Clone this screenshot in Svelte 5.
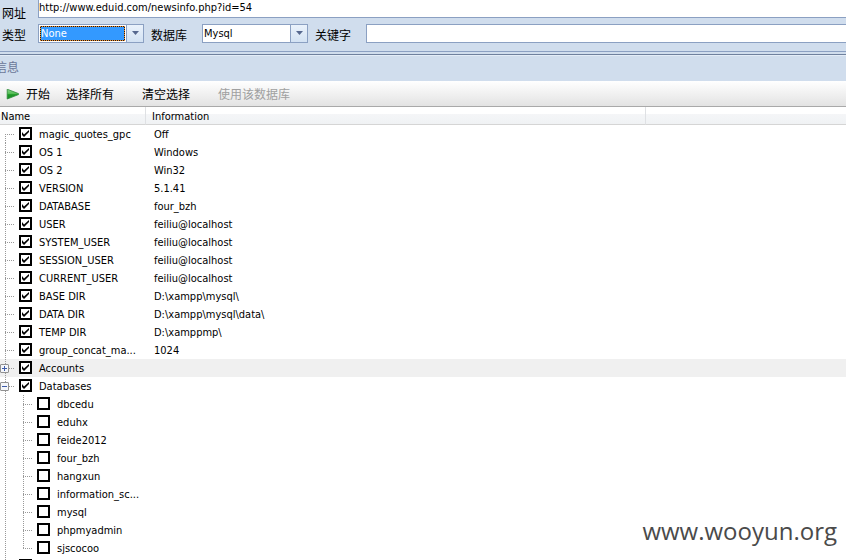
<script lang="ts">
  type Item = { name: string; info?: string; checked: boolean; open?: boolean; children?: string[] };

  let url = $state('http://www.eduid.com/newsinfo.php?id=54');
  let kind = $state('None');
  let database = $state('Mysql');
  let keyword = $state('');

  let items = $state<Item[]>([
    { name: 'magic_quotes_gpc', info: 'Off', checked: true },
    { name: 'OS 1', info: 'Windows', checked: true },
    { name: 'OS 2', info: 'Win32', checked: true },
    { name: 'VERSION', info: '5.1.41', checked: true },
    { name: 'DATABASE', info: 'four_bzh', checked: true },
    { name: 'USER', info: 'feiliu@localhost', checked: true },
    { name: 'SYSTEM_USER', info: 'feiliu@localhost', checked: true },
    { name: 'SESSION_USER', info: 'feiliu@localhost', checked: true },
    { name: 'CURRENT_USER', info: 'feiliu@localhost', checked: true },
    { name: 'BASE DIR', info: 'D:\\xampp\\mysql\\', checked: true },
    { name: 'DATA DIR', info: 'D:\\xampp\\mysql\\data\\', checked: true },
    { name: 'TEMP DIR', info: 'D:\\xamppmp\\', checked: true },
    { name: 'group_concat_ma...', info: '1024', checked: true },
    { name: 'Accounts', checked: true, open: false, children: [] },
    {
      name: 'Databases',
      checked: true,
      open: true,
      children: ['dbcedu', 'eduhx', 'feide2012', 'four_bzh', 'hangxun', 'information_sc...', 'mysql', 'phpmyadmin', 'sjscocoo'],
    },
    { name: '', checked: false },
  ]);

  let selected = $state('Accounts');
  let picked = $state<string[]>([]);

  function setAll(value: boolean) {
    for (const item of items) item.checked = value;
    picked = value ? items.flatMap((item) => item.children ?? []) : [];
  }
</script>

<main>
  <form class="query" onsubmit={(e) => e.preventDefault()}>
    <div class="line url-line">
      <label class="first" for="url">网址</label>
      <input id="url" class="field url" type="text" bind:value={url} />
    </div>
    <div class="line">
      <label class="first" for="kind">类型</label>
      <div class="combo focused">
        <select id="kind" bind:value={kind}>
          <option>None</option>
          <option>Integer</option>
          <option>String</option>
        </select>
        <span class="drop"><svg width="7" height="4" viewBox="0 0 7 4"><path d="M0 0h7L3.5 4z" fill="#56688f" /></svg></span>
      </div>
      <label for="database">数据库</label>
      <div class="combo">
        <select id="database" bind:value={database}>
          <option>Mysql</option>
          <option>MSSQL</option>
          <option>Oracle</option>
        </select>
        <span class="drop"><svg width="7" height="4" viewBox="0 0 7 4"><path d="M0 0h7L3.5 4z" fill="#56688f" /></svg></span>
      </div>
      <label for="keyword">关键字</label>
      <input id="keyword" class="field" type="text" bind:value={keyword} />
    </div>
  </form>

  <h1>信息</h1>

  <div class="toolbar">
    <button type="button" class="start">
      <svg width="13" height="12" viewBox="0 0 13 12">
        <defs>
          <linearGradient id="play" x1="0" y1="0" x2="0" y2="1">
            <stop offset="0" stop-color="#8ad68a" />
            <stop offset="0.5" stop-color="#4fba4f" />
            <stop offset="0.55" stop-color="#1c9a26" />
            <stop offset="1" stop-color="#1f8a2a" />
          </linearGradient>
        </defs>
        <path d="M1.200 .2 12.500 4.600v1L1.200 10z" fill="url(#play)" stroke="#2d8a3a" stroke-width=".8" stroke-linejoin="round" />
      </svg>
      开始
    </button>
    <button type="button" class="all" onclick={() => setAll(true)}>选择所有</button>
    <button type="button" class="none" onclick={() => setAll(false)}>清空选择</button>
    <button type="button" disabled>使用该数据库</button>
  </div>

  <table>
    <thead>
      <tr>
        <th class="name">Name</th>
        <th class="info">Information</th>
        <th></th>
      </tr>
    </thead>
    <tbody>
      {#each items as item, i}
        <tr class:selected={item.name !== '' && selected === item.name} onclick={() => (selected = item.name)}>
          <td>
            <div class="node">
              <span class="guide branch" class:top={i === 0}>
                {#if item.children}
                  <button type="button" class="expander" aria-label="Toggle {item.name}" onclick={() => (item.open = !item.open)}>
                    <svg width="7" height="7" viewBox="0 0 7 7">
                      <path d={item.open ? 'M1 3.5h5' : 'M1 3.5h5M3.5 1v5'} stroke="#3c5aa8" />
                    </svg>
                  </button>
                {/if}
              </span>
              <input id="item-{i}" type="checkbox" bind:checked={item.checked} />
              <label for="item-{i}">{item.name}</label>
            </div>
          </td>
          <td class="value">{item.info ?? ''}</td>
          <td></td>
        </tr>
        {#if item.open && item.children}
          {#each item.children as child, c}
            <tr>
              <td>
                <div class="node">
                  <span class="guide"></span>
                  <span class="guide branch" class:last={c === item.children.length - 1}></span>
                  <input id="item-{i}-{c}" type="checkbox" value={child} bind:group={picked} />
                  <label for="item-{i}-{c}">{child}</label>
                </div>
              </td>
              <td></td>
              <td></td>
            </tr>
          {/each}
        {/if}
      {/each}
    </tbody>
  </table>

  <div class="watermark">www.wooyun.org</div>
</main>

<style>
  :global(body) {
    margin: 0;
    overflow: hidden;
  }

  main {
    position: relative;
    height: 100vh;
    overflow: hidden;
    background: #fff;
    color: #000;
    font: 11px/18px 'DejaVu Sans Condensed', 'Noto Sans CJK SC', sans-serif;
  }

  input,
  select,
  button {
    box-sizing: border-box;
    margin: 0;
    padding: 0;
    border: none;
    border-radius: 0;
    background: none;
    color: inherit;
    font: inherit;
    appearance: none;
    outline: none;
  }

  .query {
    background: #d0dded;
    border-bottom: 1px solid #8ba0c2;
    padding-bottom: 8px;
  }

  .line {
    display: flex;
    height: 19px;
  }

  .url-line {
    height: 18px;
    margin-bottom: 6px;
  }

  .line > label {
    flex: none;
    box-sizing: border-box;
    width: 58px;
    padding: 3px 0 0 7px;
    font-size: 12px;
  }

  .line > label.first {
    width: 38px;
    padding-left: 2px;
  }

  .url-line > label.first {
    padding-top: 5px;
  }

  .field {
    flex: 1;
    min-width: 0;
    background: #fff;
    border: 1px solid #8ba0c2;
    border-right: none;
  }

  .field.url {
    border-top: none;
    padding-bottom: 1px;
  }

  .combo {
    display: flex;
    flex: none;
    box-sizing: border-box;
    width: 106px;
    border: 1px solid #8ba0c2;
    background: #fff;
  }

  .combo select {
    flex: 1;
    min-width: 0;
    margin: 1px;
    padding-top: 1px;
    line-height: 14px;
  }

  .combo.focused select {
    background:
      linear-gradient(#3399ff, #3399ff) padding-box,
      linear-gradient(#1c1a18, #1c1a18) border-box;
    border: 1px dotted #f09030;
    color: #fff;
    line-height: 12px;
  }

  .combo.focused option {
    color: #000;
  }

  .drop {
    display: flex;
    justify-content: center;
    width: 17px;
    padding-top: 6px;
    box-sizing: border-box;
    border-left: 1px solid #8ba0c2;
    background: linear-gradient(#eaf2fb, #d3e2f3);
  }

  h1 {
    height: 27px;
    margin: 2px 0 0;
    box-sizing: border-box;
    border-top: 1px solid #6f819e;
    box-shadow: 0 -2px #d0dded, inset 0 1px #e3ecf7;
    background: #d0dded;
    color: #6b7898;
    font-size: 12px;
    font-weight: normal;
    line-height: 26px;
    text-indent: -5px;
  }

  .toolbar {
    display: flex;
    height: 26px;
    padding-left: 6px;
    box-sizing: border-box;
    border-bottom: 1px solid #a9a9a9;
    background: linear-gradient(#fff, #e3e3e3);
  }

  .toolbar button {
    padding-top: 2px;
    font-size: 12px;
    white-space: nowrap;
  }

  .toolbar button:disabled {
    color: #a0a0a0;
  }

  .toolbar .start {
    display: flex;
    align-items: center;
    gap: 7px;
    margin-right: 16px;
  }

  .toolbar .all,
  .toolbar .none {
    margin-right: 28px;
  }

  table {
    width: 100%;
    table-layout: fixed;
    border-collapse: separate;
    border-spacing: 0;
  }

  th {
    height: 18px;
    box-sizing: border-box;
    padding: 3px 0 0 1px;
    border-right: 1px solid #dfe1e4;
    border-bottom: 1px solid #d5d5d5;
    background: linear-gradient(#fff 40%, #f5f6f8 40%, #f0f2f4);
    font-weight: normal;
    line-height: 14px;
    text-align: left;
  }

  th:last-child {
    border-right: none;
  }

  th.name {
    width: 146px;
  }

  th.info {
    width: 500px;
    padding-left: 6px;
  }

  td {
    height: 18px;
    padding: 0;
    white-space: nowrap;
  }

  td.value {
    padding: 2px 0 0 8px;
    height: 16px;
    line-height: 16px;
  }

  tr.selected {
    background: #f0f0f0;
  }

  .node {
    display: flex;
    align-items: center;
    height: 18px;
  }

  .node label {
    padding-top: 2px;
    line-height: 16px;
  }

  .guide {
    flex: none;
    display: flex;
    align-items: center;
    width: 18px;
    height: 18px;
    background: repeating-linear-gradient(#999 0 1px, transparent 1px 2px) 5px 0 / 1px 18px no-repeat;
  }

  .guide.branch {
    background:
      repeating-linear-gradient(#999 0 1px, transparent 1px 2px) 5px 0 / 1px 18px no-repeat,
      repeating-linear-gradient(90deg, #999 0 1px, transparent 1px 2px) 5px 9px / 9px 1px no-repeat;
  }

  .guide.top {
    background-position: 5px 9px, 5px 9px;
  }

  .guide.last {
    background-size: 1px 9px, 9px 1px;
  }

  .expander {
    display: flex;
    width: 9px;
    height: 9px;
    border: 1px solid #919191;
    border-radius: 1px;
    background: #f4f6fa;
  }

  input[type='checkbox'] {
    flex: none;
    width: 13px;
    height: 13px;
    margin: 0 7px 1px 1px;
    border: 2px solid #000;
    background: #fff;
  }

  input[type='checkbox']:checked {
    background: #fff url("data:image/svg+xml,%3Csvg xmlns='http://www.w3.org/2000/svg' viewBox='0 0 9 9'%3E%3Cpath d='M1 3v3l2 2 5-5V1L3 5.500z'/%3E%3C/svg%3E") center / 9px 9px no-repeat;
  }

  .watermark {
    position: absolute;
    right: 9px;
    bottom: 11px;
    color: #4a4a4a;
    font: 24px/36px 'Open Sans', sans-serif;
    pointer-events: none;
  }
</style>
